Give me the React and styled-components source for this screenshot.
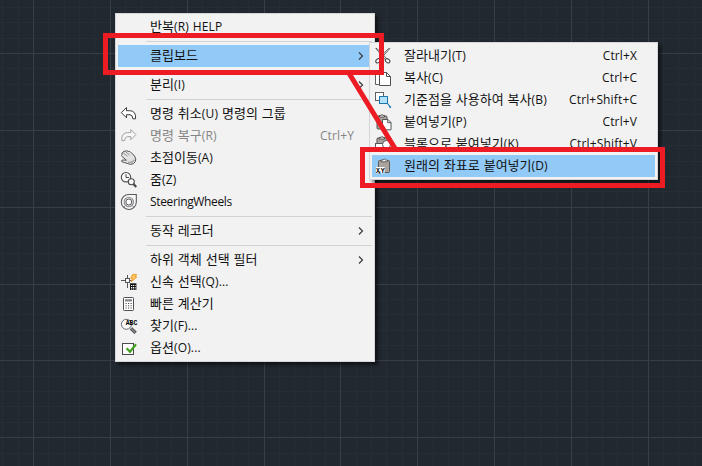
import styled, { createGlobalStyle } from 'styled-components';

const GlobalStyle = createGlobalStyle`
  body {
    margin: 0;
    background: #212830;
    overflow: hidden;
  }
`;

const IconText = styled.text`
  font-family: 'Liberation Mono', monospace;
  font-size: 6.5px;
  font-weight: 700;
  fill: #000;
`;

const MAJOR = 76.84;

// grid lines, every fifth one is a major line
const gridLines = (start, size) => {
  const lines = [];
  for (let i = -5; i < 60; i++) {
    const pos = Math.round(start + (i * MAJOR) / 5);
    if (pos >= 0 && pos < size) lines.push({ pos, major: i % 5 === 0 });
  }
  return lines;
};

const Grid = () => (
  <GridSvg width='702' height='466'>
    {[false, true].map((major) => (
      <g key={String(major)} fill={major ? '#363e46' : '#262d35'}>
        {gridLines(33, 702).filter((l) => l.major === major).map((l) => (
          <rect key={`v${l.pos}`} x={l.pos} y='0' width='1' height='466' />
        ))}
        {gridLines(53, 466).filter((l) => l.major === major).map((l) => (
          <rect key={`h${l.pos}`} x='0' y={l.pos} width='702' height='1' />
        ))}
      </g>
    ))}
  </GridSvg>
);

const icons = {
  undo: (
    <path d='M7.5 3.5L2.4 8.7l5.1 5.1v-3.1H11q2.7.2 2.9 4.1h2.7q.6-8.1-6-8.1H7.5z' fill='#fff' stroke='#3c3c40' />
  ),
  redo: (
    <path d='M11.8 3.5l5.1 5.1-5.1 5.1v-3.1H8.4q-2.7.2-2.9 4.1H2.8q-.6-8.1 6-8.1h3z' fill='#f7f7f7' stroke='#a2a2a2' />
  ),
  pan: (
    <>
      <path
        d='M3 6.6Q2.2 4.6 4 4.4 4.2 2.8 6.2 3.2q1.6-1 3 .2 2-.4 3 1.4Q16 7 16.8 11q.3 3-2.6 4.8-3 1.2-5.4-.2-3.4-1.2-5.6-1.6-1.4-1 0-2l4.2.2L3 8.4q-1-1 0-1.8z'
        fill='#e2e2e2'
        stroke='#55555a'
      />
      <path d='M4 4.8l4.6 3.4M6.4 3.6L10.6 7' fill='none' stroke='#77777b' strokeWidth='.7' />
      <path d='M9 14.2q4 1.2 6.4-2.4' fill='none' stroke='#aaa' strokeWidth='1.6' />
    </>
  ),
  zoom: (
    <>
      <circle cx='7' cy='7.2' r='4.7' fill='#f8f8f8' stroke='#4a4a4e' strokeWidth='1.1' />
      <path d='M7 4.2v3.3h3' fill='none' stroke='#4a4a4e' />
      <path d='M14.5 14l2.7 3' stroke='#4a4a4e' strokeWidth='2.3' />
      <circle cx='12.3' cy='11.7' r='3' fill='#fff' stroke='#4a4a4e' strokeWidth='1.1' />
    </>
  ),
  wheel: (
    <>
      <path d='M17.3 2.5v7.7a7.5 7.5 0 1 1-7.5-7.7z' fill='#fafafa' stroke='#58585c' strokeWidth='1.1' />
      <circle cx='9.8' cy='10' r='4.7' fill='#e7e7e7' stroke='#8b8b8f' strokeWidth='1.1' />
      <circle cx='9.8' cy='10' r='3' fill='#fff' stroke='#58585c' />
      <path d='M6.5 13.3L5 15M13.1 13.3l1.6 1.7' stroke='#8b8b8f' />
    </>
  ),
  quick: (
    <>
      <path d='M2 8.5h4.5M10.5 8.5H14M8.5 3v3.5M8.5 10.5V16' stroke='#55555a' />
      <rect x='6.5' y='6.5' width='4' height='4' fill='#fff' stroke='#55555a' />
      <path d='M13.6 2.4h4l-1.7 2.5h2l-5.8 5 1.6-3.5h-2z' fill='#ffc765' stroke='#ee9824' strokeWidth='.9' />
      <rect x='11' y='11.3' width='6.4' height='6.7' fill='#111' />
      <path d='M12 13.5h4.6M12 15.5h4.6M12 17h4.6' stroke='#fff' strokeWidth='1' strokeDasharray='1.2 .7' />
    </>
  ),
  calc: (
    <>
      <rect x='4.5' y='3.5' width='10' height='13' rx='.8' fill='#fff' stroke='#505054' />
      <rect x='6' y='5.2' width='7' height='2.3' fill='#88888c' />
      <path d='M6.5 9.5h7M6.5 11.7h7M6.5 14h7' stroke='#505054' strokeWidth='1.1' strokeDasharray='1.2 1.3' />
    </>
  ),
  find: (
    <>
      <path d='M12 12.3l4.6 4.6' stroke='#3f3f43' strokeWidth='3.3' />
      <path d='M12 12.3l4.3 4.3' stroke='#8c8c90' strokeWidth='1.5' />
      <circle cx='7.4' cy='8.3' r='5' fill='#fafafa' stroke='#68686c' />
      <IconText x='6.8' y='9.3' textLength='11.5'>ABC</IconText>
    </>
  ),
  options: (
    <>
      <rect x='3.5' y='5.5' width='11' height='11' fill='#fff' stroke='#4c4c50' />
      <path d='M7.6 10.2l3.4 3.6L17 6.2' fill='none' stroke='#43a01f' strokeWidth='2.2' />
    </>
  ),
  cut: (
    <>
      <path d='M2.8 2.5l9.7 11.2 1.2-1.1L4 2.5zM16.8 2.5L7 13.7l-1.2-1.1 9.8-10.1z' fill='#fff' stroke='#56565a' strokeWidth='.9' />
      <ellipse cx='5' cy='14.8' rx='2.5' ry='1.8' transform='rotate(-40 5 14.8)' fill='#fff' stroke='#4a4a4e' strokeWidth='1.1' />
      <ellipse cx='14.6' cy='14.8' rx='2.5' ry='1.8' transform='rotate(40 14.6 14.8)' fill='#fff' stroke='#4a4a4e' strokeWidth='1.1' />
    </>
  ),
  copy: (
    <>
      <path d='M2.5 5.5h5v11h-5z' fill='#fff' stroke='#606064' />
      <path d='M6.5 4.5h7l4 4v9h-11z' fill='#fff' stroke='#505054' />
      <path d='M13.5 4.5v4h4' fill='none' stroke='#505054' />
    </>
  ),
  base: (
    <>
      <rect x='2.5' y='2.5' width='8' height='8' fill='#fff' stroke='#606064' />
      <rect x='6.5' y='6.5' width='8' height='7' fill='#b4e1fa' stroke='#1e76ab' />
      <path d='M14.5 13.5l2.7 3.3' stroke='#1e76ab' strokeWidth='1.1' />
      <circle cx='17.2' cy='17' r='1' fill='#1e76ab' />
    </>
  ),
  paste: (
    <>
      <rect x='4' y='4' width='10' height='13' rx='1' fill='#aaa39e' stroke='#55504d' />
      <path d='M6.5 5V3.4H8q1-1.8 2 0h1.5V5z' fill='#fff' stroke='#55504d' />
      <path d='M9.5 7.5h5.5l3 3v7.3H9.5z' fill='#fff' stroke='#55555a' />
      <path d='M14.7 7.5v3.2H18' fill='none' stroke='#55555a' />
    </>
  ),
  block: (
    <>
      <rect x='4' y='4' width='10' height='13' rx='1' fill='#aaa39e' stroke='#55504d' />
      <path d='M6.5 5V3.4H8q1-1.8 2 0h1.5V5z' fill='#fff' stroke='#55504d' />
      <rect x='2.5' y='9.5' width='9' height='7' fill='#fff' stroke='#55555a' />
      <circle cx='13.5' cy='10.5' r='4' fill='#fff' stroke='#55555a' />
    </>
  ),
  coords: (
    <>
      <rect x='5.5' y='4.5' width='11' height='12' rx='1' fill='#aaa39e' stroke='#5d5855' />
      <path d='M8 5.8V4h2q1.2-2 2.4 0h2v1.8z' fill='#fff' stroke='#5d5855' />
      <rect x='3' y='11' width='8.6' height='6.3' fill='#fff' />
      <IconText x='3' y='16.8' textLength='8.6'>X,Y</IconText>
    </>
  ),
};

const mainMenu = [
  { label: '반복(R) HELP' },
  { divider: true },
  { label: '클립보드', arrow: true, active: true },
  { divider: true },
  { label: '분리(I)', arrow: true },
  { divider: true },
  { label: '명령 취소(U) 명령의 그룹', icon: 'undo' },
  { label: '명령 복구(R)', icon: 'redo', keys: 'Ctrl+Y', disabled: true },
  { label: '초점이동(A)', icon: 'pan' },
  { label: '줌(Z)', icon: 'zoom' },
  { label: 'SteeringWheels', icon: 'wheel', tight: true },
  { divider: true },
  { label: '동작 레코더', arrow: true },
  { divider: true },
  { label: '하위 객체 선택 필터', arrow: true },
  { label: '신속 선택(Q)...', icon: 'quick' },
  { label: '빠른 계산기', icon: 'calc' },
  { label: '찾기(F)...', icon: 'find' },
  { label: '옵션(O)...', icon: 'options' },
];

const clipboardMenu = [
  { label: '잘라내기(T)', icon: 'cut', keys: 'Ctrl+X' },
  { label: '복사(C)', icon: 'copy', keys: 'Ctrl+C' },
  { label: '기준점을 사용하여 복사(B)', icon: 'base', keys: 'Ctrl+Shift+C' },
  { label: '붙여넣기(P)', icon: 'paste', keys: 'Ctrl+V' },
  { label: '블록으로 붙여넣기(K)', icon: 'block', keys: 'Ctrl+Shift+V' },
  { label: '원래의 좌표로 붙여넣기(D)', icon: 'coords', active: true },
];

// Hangul is set a little larger than the latin letters
const Label = ({ text, tight }) => (
  <LabelText $tight={tight}>
    {text.split(/([가-힣]+)/).filter(Boolean).map((part, i) =>
      /[가-힣]/.test(part) ? <Hangul key={i}>{part}</Hangul> : part
    )}
  </LabelText>
);

const MenuItem = ({ label, icon, keys, arrow, active, disabled, tight }) => (
  <Row $active={active} $disabled={disabled}>
    <IconCell>
      {icon && <svg width='20' height='20' viewBox='0 0 20 20'>{icons[icon]}</svg>}
    </IconCell>
    <Label text={label} tight={tight} />
    {keys && <Keys>{keys}</Keys>}
    {arrow && (
      <Arrow width='6' height='8' viewBox='0 0 6 8'>
        <path d='M1 .5L4.5 4 1 7.5' fill='none' stroke='#3c3c3c' strokeWidth='1.2' />
      </Arrow>
    )}
  </Row>
);

const Menu = ({ items, ...rest }) => (
  <Panel {...rest}>
    {items.map((item, i) =>
      item.divider ? <Divider key={i} /> : <MenuItem key={i} {...item} />
    )}
  </Panel>
);

const App = () => {
  return (
    <>
      <GlobalStyle />
      <Canvas>
        <Grid />
        <Menu items={mainMenu} $x={115} $y={13} $w={260} />
        <Menu items={clipboardMenu} $x={369} $y={42} $w={289} />
        {/* callouts */}
        <Pointer width='60' height='84' viewBox='0 0 60 84'>
          <path d='M5 0L54 80' stroke='#ed1c24' strokeWidth='5' />
        </Pointer>
        <Callout $x={103} $y={33} $w={281} $h={42} />
        <Callout $x={360} $y={147} $w={305} $h={41} />
      </Canvas>
    </>
  );
};

const Canvas = styled.main`
  position: relative;
  width: 702px;
  height: 466px;
  overflow: hidden;
  background: #212830;
  font-family: 'Open Sans', 'Noto Sans CJK KR', sans-serif;
`;

const GridSvg = styled.svg`
  display: block;
`;

const Panel = styled.div`
  position: absolute;
  left: ${({ $x }) => $x}px;
  top: ${({ $y }) => $y}px;
  width: ${({ $w }) => $w}px;
  box-sizing: border-box;
  padding: 2px;
  border: 1px solid #d5d6d7;
  background: #f2f2f2;
  box-shadow: 3px 3px 3px rgba(0, 0, 0, 0.5);
`;

const Row = styled.div`
  display: flex;
  align-items: center;
  height: 22px;
  padding-right: 18px;
  font-size: 12px;
  line-height: 22px;
  color: ${({ $disabled }) => ($disabled ? '#858585' : '#111')};
  background: ${({ $active }) => ($active ? '#91c9f7' : 'transparent')};
`;

const IconCell = styled.span`
  display: flex;
  flex: none;
  width: 31px;
  padding-left: 1px;
`;

const LabelText = styled.span`
  flex: 1;
  height: 22px;
  white-space: pre;
  word-spacing: 0.6px;
  letter-spacing: ${({ $tight }) => ($tight ? '-0.35px' : '0.15px')};
`;

const Hangul = styled.span`
  font-family: 'Noto Sans CJK KR', sans-serif;
  font-size: 13px;
  line-height: 1;
  letter-spacing: 0.02px;
`;

const Keys = styled.span`
  margin-right: -0.15px;
  letter-spacing: 0.15px;
`;

const Arrow = styled.svg`
  flex: none;
  margin-right: -10px;
`;

const Divider = styled.div`
  height: 1px;
  margin: 3px 0 3px 28px;
  background: #d2d2d2;
`;

const Pointer = styled.svg`
  position: absolute;
  left: 342px;
  top: 70px;
`;

const Callout = styled.div`
  position: absolute;
  left: ${({ $x }) => $x}px;
  top: ${({ $y }) => $y}px;
  width: ${({ $w }) => $w}px;
  height: ${({ $h }) => $h}px;
  box-sizing: border-box;
  border: 5px solid #ed1c24;
`;

export default App;
